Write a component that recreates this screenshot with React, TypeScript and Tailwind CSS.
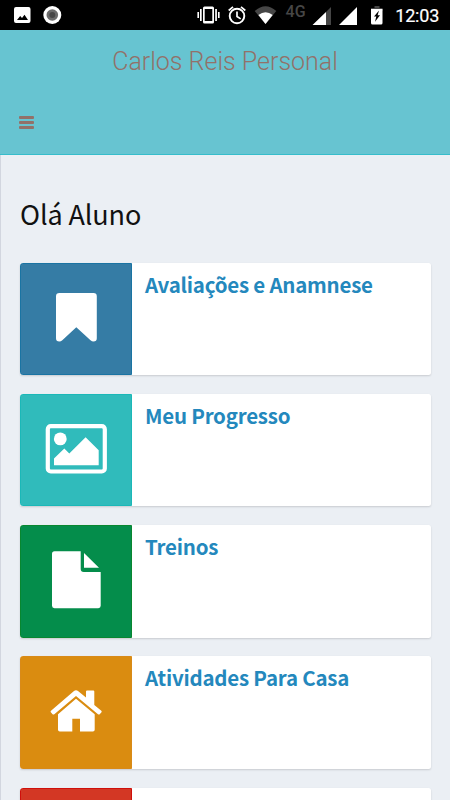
import type { ReactNode } from 'react';

function StatusBar() {
  return (
    <div className="h-[30px] bg-black">
      <svg width="450" height="30" viewBox="0 0 450 30" fill="#fff" role="img" aria-label="Status">
        <path fillRule="evenodd" d="M16 7h12.500a2 2 0 0 1 2 2v12a2 2 0 0 1-2 2H16a2 2 0 0 1-2-2V9a2 2 0 0 1 2-2zM17 20h11l-3.500-5.200-2.500 3.200-1.800-2z" />
        <circle cx="52.300" cy="15" r="9" />
        <circle cx="52.300" cy="15" r="5.800" fill="#6b6b6b" />
        <circle cx="52.300" cy="15" r="3" fill="#464646" />
        <path fillRule="evenodd" d="M204.500 6.500h8a1.500 1.500 0 0 1 1.500 1.500v14a1.500 1.500 0 0 1-1.500 1.500h-8a1.500 1.500 0 0 1-1.500-1.500V8a1.500 1.500 0 0 1 1.500-1.500zM204.700 9v12h7.600V9z" />
        <path d="M200 9h1.700v12H200zM197.400 12h1.600v6h-1.600zM215.200 9h1.700v12h-1.700zM218 12h1.600v6H218z" />
        <g fill="none" stroke="#fff" strokeWidth="1.900">
          <circle cx="237" cy="16" r="7.300" />
          <path d="M228.700 10.500l4.300-3.600M245.300 10.500L241 6.900M237 11.500v5l3.700 2.400" strokeWidth="1.700" />
        </g>
        <path d="M254.700 11q10.800-9.500 21.600 0l-10.800 13z" fill="#464646" />
        <path d="M258.400 15q7.200-5.600 14.300 0l-7.200 9z" />
        <text x="285.500" y="16.700" fontSize="16" letterSpacing="0.100" className="font-['Roboto',sans-serif] font-medium" fill="#464646">4G</text>
        <path d="M331 7v18h-5V12z" fill="#464646" />
        <path d="M326 12v13h-13.500zM357 7v18h-18z" />
        <path d="M374.500 6h5v2h3v3h-11.500V8h3.500z" fill="#464646" />
        <path fillRule="evenodd" d="M371 9h11.500v14a1.500 1.500 0 0 1-1.500 1.500h-8.500a1.500 1.500 0 0 1-1.500-1.500zM379 10.500l-5 6h2.300l-1.300 5.200 5-6.500h-2.400z" />
        <text x="395.300" y="22" fontSize="18" textLength="44" stroke="#fff" strokeWidth="0.200" className="font-['Roboto',sans-serif] font-normal">12:03</text>
      </svg>
    </div>
  );
}

const icons: Record<string, ReactNode> = {
  bookmark: <path d="M39.500 30h34q3.300 0 3.300 3.300v42q0 3.300-3.300 3.300-1.600 0-3-1.300L56.300 64.300 42.300 77.300q-1.400 1.300-3 1.300-3.300 0-3.300-3.300v-42q0-3.300 3.500-3.300z" />,
  image: (
    <>
      <rect x="27.800" y="32.200" width="57" height="45.300" rx="3" fill="none" stroke="#fff" strokeWidth="4.200" />
      <circle cx="40.300" cy="44.900" r="6.400" />
      <path d="M34 64.500l10.300-10 5 5 16.300-16.300 13.100 13v15H34z" />
    </>
  ),
  file: <path d="M34.500 26.300h26.200v17.600q0 3 3 3h17v33.900q0 2.400-2.400 2.400H34.500Q32 83.200 32 80.800v-52q0-2.500 2.500-2.500zM64 28l15 14.800H64z" />,
  home: <path d="M54 35q2-1.300 4 0l8 6.600v-6q0-1 1-1h6.300q1 0 1 1V49l7 5.700q.8.700.2 1.500l-1.800 2q-.7.700-1.700 0L56 40 34.300 58.200q-1 .7-1.700 0l-1.800-2q-.6-.8.200-1.500zM56 42.700l18.700 15.500v15.500q0 1.800-1.800 1.800H60V62.700h-7.700v12.800H39.800q-1.800 0-1.800-1.800V58.200z" />,
};

interface CardProps {
  title?: string;
  icon?: string;
  tone: string;
}

function MenuCard({ title, icon, tone }: CardProps) {
  return (
    <a className="flex h-[112.500px] shrink-0 overflow-hidden rounded-[2.500px] bg-white shadow-[0_1px_2px_rgba(0,0,0,0.150)]">
      <span className={`w-[112px] shrink-0 rounded-l-[2.500px] border ${tone}`}>
        {icon && (
          <svg width="112" height="112" viewBox="0 0 112 112" fill="#fff" className="-m-px">
            {icons[icon]}
          </svg>
        )}
      </span>
      <span className="pt-[5px] pl-[13px] font-['Noto_Sans_CJK_JP',sans-serif] text-[20.500px] leading-[32px] font-bold tracking-[-0.230px] whitespace-nowrap text-[#2488bd]">
        {title}
      </span>
    </a>
  );
}

export default function App() {
  return (
    <div className="flex h-[800px] w-[450px] flex-col overflow-hidden bg-[#ebeff4]">
      <StatusBar />
      <header className="h-[125px] shrink-0 border-b border-[#36bdcb] bg-[#67c4d1] text-[#927169]">
        <h1 className="pt-[14px] text-center font-['Roboto',sans-serif] text-[25px] leading-[36px] font-light">Carlos Reis Personal</h1>
        <button className="mt-[36px] ml-[19px] flex h-[13px] w-[15px] flex-col justify-between" aria-label="Menu">
          <span className="h-[3px] w-full rounded-[1px] bg-current" />
          <span className="h-[3px] w-full rounded-[1px] bg-current" />
          <span className="h-[3px] w-full rounded-[1px] bg-current" />
        </button>
      </header>
      <main className="flex grow flex-col border-l border-[#d2d6df] pr-[19px] pl-[19px]">
        <h2 className="mt-[39px] mb-[28.500px] font-['Noto_Sans_CJK_JP',sans-serif] text-[27px] leading-[40px] tracking-[-0.120px] whitespace-nowrap text-[#111]">Olá Aluno</h2>
        <div className="flex flex-col gap-[18.750px]">
          <MenuCard title="Avaliações e Anamnese" icon="bookmark" tone="bg-[#357ca5] border-[#1a74a3]" />
          <MenuCard title="Meu Progresso" icon="image" tone="bg-[#30bbbb] border-[#1bb8b8]" />
          <MenuCard title="Treinos" icon="file" tone="bg-[#048d4b] border-[#088730]" />
          <MenuCard title="Atividades Para Casa" icon="home" tone="bg-[#da8c10] border-[#d98a18]" />
          <MenuCard tone="bg-[#d33724] border-[#cf0f0b]" />
        </div>
      </main>
    </div>
  );
}
